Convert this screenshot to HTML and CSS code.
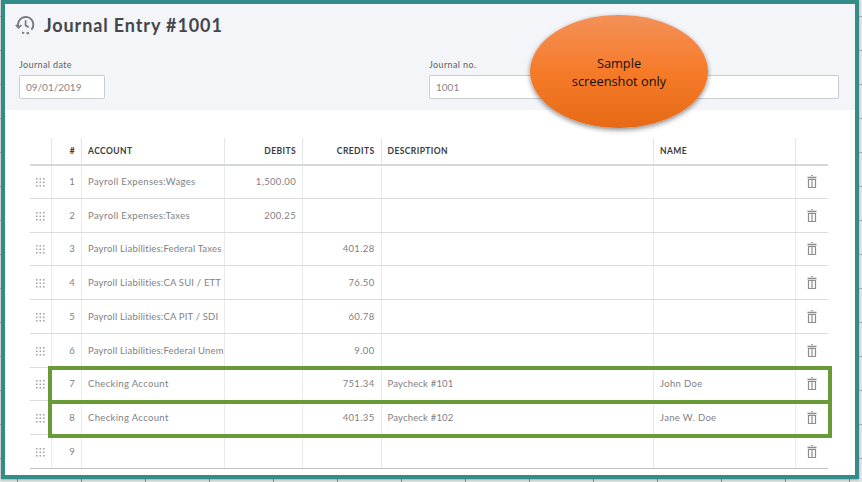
FILE: index.html
```html
<!DOCTYPE html>
<html lang="en">
<head>
<meta charset="utf-8">
<title>Journal Entry #1001</title>
<link rel="stylesheet" href="styles.css">
</head>
<body>
<svg class="defs" width="0" height="0" aria-hidden="true">
  <symbol id="grip" viewBox="0 0 9 9"><g fill="#a6a8ac"><rect x="0" y="0" width="1.6" height="1.6"/><rect x="3.5" y="0" width="1.6" height="1.6"/><rect x="7" y="0" width="1.6" height="1.6"/><rect x="0" y="3.5" width="1.6" height="1.6"/><rect x="3.5" y="3.5" width="1.6" height="1.6"/><rect x="7" y="3.5" width="1.6" height="1.6"/><rect x="0" y="7" width="1.6" height="1.6"/><rect x="3.5" y="7" width="1.6" height="1.6"/><rect x="7" y="7" width="1.6" height="1.6"/></g></symbol>
  <symbol id="trash" viewBox="0 0 10 13"><path d="M4 .5h2" fill="none" stroke="#a4a6aa" stroke-width="1"/><path d="M.5 2.5h9" fill="none" stroke="#8b8d91" stroke-width="1.6"/><path d="M1.5 4.5h7v8h-7zM5 4.5v8" fill="none" stroke="#8b8d91" stroke-width="1.2"/></symbol>
</svg>
<main class="frame">
  <header class="head">
    <div class="title-row">
      <svg class="hist" viewBox="0 0 20 20" width="20" height="20" aria-hidden="true">
        <path d="M3.4 11.8A7.6 7.6 0 1 1 16.4 14.6" fill="none" stroke="#76777c" stroke-width="1.9"/>
        <path d="M10.6 5.2v5.2l3.2 1.8" fill="none" stroke="#76777c" stroke-width="1.7"/>
        <path d="M.8 10l2.8 2.8L6.4 10M7 17.4l2.2.8M11.6 18.6l2.4-1" fill="none" stroke="#76777c" stroke-width="1.7"/>
      </svg>
      <h1 class="title">Journal Entry #1001</h1>
    </div>
    <div class="fields">
      <div class="field field-date">
        <label class="label">Journal date</label>
        <div class="input">09/01/2019</div>
      </div>
      <div class="field field-no">
        <label class="label">Journal no.</label>
        <div class="input">1001</div>
      </div>
    </div>
  </header>
  <section class="body">
    <table class="grid">
      <colgroup>
        <col class="c-grip"><col class="c-num"><col class="c-acct"><col class="c-deb"><col class="c-cred"><col class="c-desc"><col class="c-name"><col class="c-del">
      </colgroup>
      <thead>
        <tr><th></th><th class="r">#</th><th>ACCOUNT</th><th class="r">DEBITS</th><th class="r">CREDITS</th><th>DESCRIPTION</th><th>NAME</th><th></th></tr>
      </thead>
      <tbody>
        <tr><td class="g"><svg class="grip"><use href="#grip"/></svg></td><td class="r">1</td><td class="acct">Payroll Expenses:Wages</td><td class="r">1,500.00</td><td class="r"></td><td></td><td></td><td class="g"><svg class="trash"><use href="#trash"/></svg></td></tr>
        <tr><td class="g"><svg class="grip"><use href="#grip"/></svg></td><td class="r">2</td><td class="acct">Payroll Expenses:Taxes</td><td class="r">200.25</td><td class="r"></td><td></td><td></td><td class="g"><svg class="trash"><use href="#trash"/></svg></td></tr>
        <tr><td class="g"><svg class="grip"><use href="#grip"/></svg></td><td class="r">3</td><td class="acct tight">Payroll Liabilities:Federal Taxes</td><td class="r"></td><td class="r">401.28</td><td></td><td></td><td class="g"><svg class="trash"><use href="#trash"/></svg></td></tr>
        <tr><td class="g"><svg class="grip"><use href="#grip"/></svg></td><td class="r">4</td><td class="acct tight">Payroll Liabilities:CA SUI / ETT</td><td class="r"></td><td class="r">76.50</td><td></td><td></td><td class="g"><svg class="trash"><use href="#trash"/></svg></td></tr>
        <tr><td class="g"><svg class="grip"><use href="#grip"/></svg></td><td class="r">5</td><td class="acct tight">Payroll Liabilities:CA PIT / SDI</td><td class="r"></td><td class="r">60.78</td><td></td><td></td><td class="g"><svg class="trash"><use href="#trash"/></svg></td></tr>
        <tr><td class="g"><svg class="grip"><use href="#grip"/></svg></td><td class="r">6</td><td class="acct tight">Payroll Liabilities:Federal Unem</td><td class="r"></td><td class="r">9.00</td><td></td><td></td><td class="g"><svg class="trash"><use href="#trash"/></svg></td></tr>
        <tr><td class="g"><svg class="grip"><use href="#grip"/></svg></td><td class="r">7</td><td class="acct">Checking Account</td><td class="r"></td><td class="r">751.34</td><td class="tight">Paycheck #101</td><td>John Doe</td><td class="g"><svg class="trash"><use href="#trash"/></svg></td></tr>
        <tr><td class="g"><svg class="grip"><use href="#grip"/></svg></td><td class="r">8</td><td class="acct">Checking Account</td><td class="r"></td><td class="r">401.35</td><td class="tight">Paycheck #102</td><td>Jane W. Doe</td><td class="g"><svg class="trash"><use href="#trash"/></svg></td></tr>
        <tr><td class="g"><svg class="grip"><use href="#grip"/></svg></td><td class="r">9</td><td class="acct"></td><td class="r"></td><td class="r"></td><td></td><td></td><td class="g"><svg class="trash"><use href="#trash"/></svg></td></tr>
      </tbody>
    </table>
  </section>
  <div class="hl hl-a"></div>
  <div class="hl hl-b"></div>
  <div class="bubble"><span>Sample<br>screenshot only</span></div>
</main>
</body>
</html>
```
FILE: styles.css
```css
* { box-sizing: border-box; }
html, body { margin: 0; height: 100%; }
body {
  width: 862px;
  height: 482px;
  overflow: hidden;
  background-color: #e2e3e4;
  background-image:
    repeating-linear-gradient(90deg, transparent 0 17px, #8f9192 17px 18px, transparent 18px 64px),
    repeating-linear-gradient(180deg, transparent 0 16px, #a9abac 16px 17px, transparent 17px 34px);
  font-family: "Lato", "Liberation Sans", sans-serif;
}
.defs { position: absolute; }
.frame {
  position: relative;
  width: 858px;
  height: 479px;
  margin-left: 1px;
  border: 4px solid #328c88;
  background: #fff;
  box-shadow: 0 1px 2px rgba(0,0,0,.25);
}
.head {
  height: 106px;
  background: #f3f5f9;
  padding: 10px 16px 0 14px;
}
.title-row { display: flex; align-items: center; gap: 9px; height: 22px; }
.hist { flex: none; margin-left: -4px; }
.title {
  margin: 0;
  font-size: 18px;
  line-height: 22px;
  font-weight: 700;
  color: #45464a;
  letter-spacing: .88px;
}
.fields { display: flex; margin-top: 23px; }
.field-date { width: 410px; }
.field-no { flex: 1; }
.label { display: block; font-size: 9px; line-height: 11px; color: #606165; letter-spacing: .38px; }
.input {
  margin-top: 5px;
  height: 24px;
  border: 1px solid #c9ccd3;
  border-radius: 2px;
  background: #fff;
  font-size: 10px;
  line-height: 22px;
  padding-left: 6px;
  color: #85868a;
}
.field-date .input { width: 86px; }
.body { padding: 28px 0 0 25px; }
.grid {
  width: 798px;
  table-layout: fixed;
  border-collapse: collapse;
  font-size: 9.5px;
  color: #808185;
}
.c-grip { width: 21.5px; } .c-num { width: 30px; } .c-acct { width: 142.5px; }
.c-deb { width: 78.5px; } .c-cred { width: 78.5px; } .c-desc { width: 272.5px; }
.c-name { width: 142px; } .c-del { width: 32.5px; }
th {
  height: 26.5px;
  padding: 0 6px;
  text-align: left;
  font-size: 8.5px;
  font-weight: 700;
  color: #393a3d;
  letter-spacing: .42px;
  border-left: 1px solid #e3e5e8;
  border-bottom: 2px solid #d4d7dd;
}
th:first-child, td:first-child { border-left: 0; }
td {
  height: 33.75px;
  padding: 0 6px;
  border-left: 1px solid #e9eaec;
  border-bottom: 1px solid #dadce0;
  letter-spacing: .34px;
  white-space: nowrap;
}
tbody tr:last-child td { border-bottom-color: #bfc1c4; }
.r { text-align: right; }
.g { text-align: center; padding: 0; }
.acct { padding-right: 0; overflow: hidden; }
td.tight { letter-spacing: .18px; }
.grip { width: 9px; height: 9px; display: inline-block; vertical-align: middle; }
.trash { width: 10px; height: 13px; display: inline-block; vertical-align: middle; }
.hl {
  position: absolute;
  left: 43px;
  width: 784px;
  height: 38px;
  border: 4px solid #689b37;
  pointer-events: none;
}
.hl-a { top: 362px; }
.hl-b { top: 396px; }
.bubble {
  position: absolute;
  left: 525px;
  top: 11px;
  width: 178px;
  height: 113px;
  border-radius: 50%;
  background: linear-gradient(180deg, #f39058 0%, #f67b29 50%, #e66a15 100%);
  box-shadow: 0 2px 5px rgba(0,0,0,.45);
  display: flex;
  align-items: center;
  justify-content: center;
  text-align: center;
  font-family: "Open Sans", "Liberation Sans", sans-serif;
  font-size: 12.8px;
  line-height: 18px;
  color: #111;
}
```
